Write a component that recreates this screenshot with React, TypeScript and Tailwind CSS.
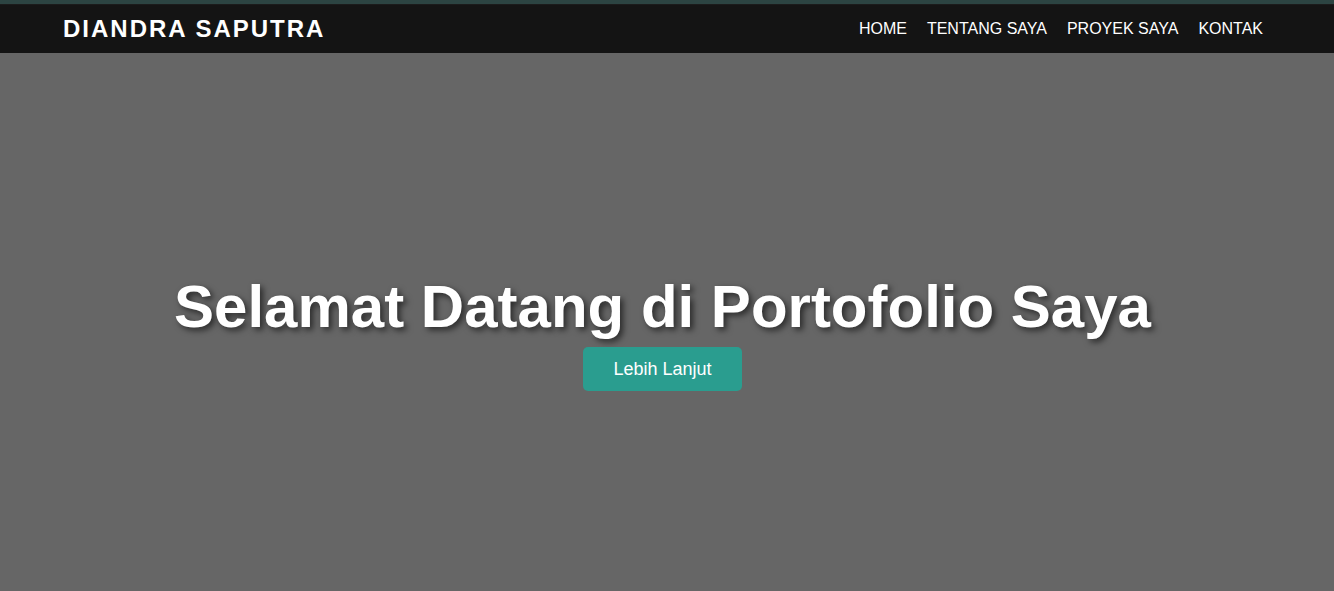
import React from "react";

export default function App() {
  const links = ["HOME", "TENTANG SAYA", "PROYEK SAYA", "KONTAK"];
  return (
    <div className="min-h-[591px] w-full bg-[#666666] font-['Liberation_Sans',Arial,sans-serif]">
      <div className="h-[4px] bg-[#2c4442]" />
      <div className="h-[1px] bg-[#1b1b1b]" />
      <nav className="flex h-[48px] items-center justify-between bg-[#141414] pl-[63px] pr-[71px]">
        <div className="text-[24px] font-bold tracking-[2px] text-white">DIANDRA SAPUTRA</div>
        <ul className="flex gap-[20px]">
          {links.map((l) => (
            <li key={l} className="text-[16px] text-white">
              {l}
            </li>
          ))}
        </ul>
      </nav>
      <section className="flex h-[538px] flex-col items-center justify-start pr-[9px] pt-[217px]">
        <h1 className="text-[60px] font-bold leading-[74px] text-white [text-shadow:3px_3px_6px_rgba(0,0,0,0.6)]">
          Selamat Datang di Portofolio Saya
        </h1>
        <button className="mt-[3px] h-[44px] rounded-[5px] bg-[#2a9d8f] px-[30px] text-[18px] text-white">
          Lebih Lanjut
        </button>
      </section>
    </div>
  );
}
